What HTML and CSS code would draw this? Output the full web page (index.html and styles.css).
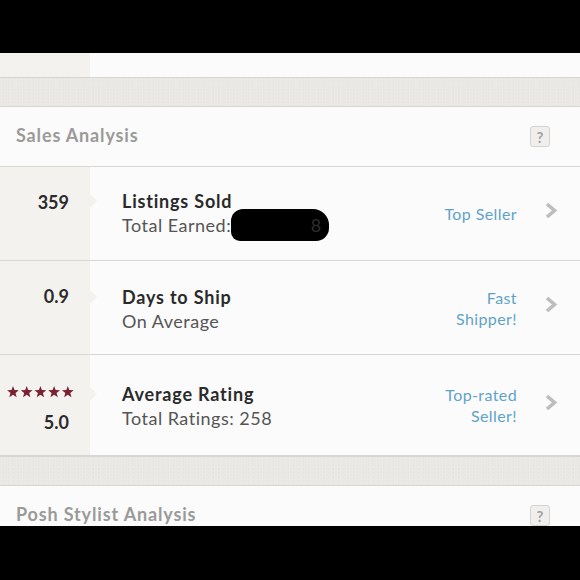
FILE: index.html
```html
<!DOCTYPE html>
<html>
<head>
<meta charset="utf-8">
<link rel="stylesheet" href="styles.css">
</head>
<body>
<div class="topbar"></div>
<div class="screen">
  <div class="stub"><div class="stub-left"></div></div>
  <div class="band"></div>
  <div class="section-head">
    <span class="section-title">Sales Analysis</span>
    <span class="help">?</span>
  </div>

  <div class="stat-row">
    <div class="stat-left"><span class="stat-num">359</span></div>
    <div class="stat-main">
      <div class="stat-text">
        <div class="stat-title">Listings Sold</div>
        <div class="stat-sub">Total Earned:<span class="redact"><span class="redact-digit">8</span></span></div>
      </div>
      <div class="badge">Top Seller</div>
      <svg class="chev" width="12" height="17" viewBox="0 0 12 17"><path d="M2 2 L9.5 8.5 L2 15" fill="none" stroke="#bdbdbd" stroke-width="3.6"/></svg>
    </div>
  </div>

  <div class="stat-row">
    <div class="stat-left"><span class="stat-num">0.9</span></div>
    <div class="stat-main">
      <div class="stat-text">
        <div class="stat-title">Days to Ship</div>
        <div class="stat-sub">On Average</div>
      </div>
      <div class="badge">Fast<br>Shipper!</div>
      <svg class="chev" width="12" height="17" viewBox="0 0 12 17"><path d="M2 2 L9.5 8.5 L2 15" fill="none" stroke="#bdbdbd" stroke-width="3.6"/></svg>
    </div>
  </div>

  <div class="stat-row tall">
    <div class="stat-left stars-col">
      <svg class="stars" width="67" height="12" viewBox="0 0 67 12">
        <defs><path id="st" d="M6 0 L7.5 4 L11.9 4.2 L8.5 6.9 L9.7 11.3 L6 8.8 L2.3 11.3 L3.5 6.9 L0.1 4.2 L4.5 4 Z" fill="#7a2134"/></defs>
        <use href="#st" x="0"/><use href="#st" x="13.7"/><use href="#st" x="27.4"/><use href="#st" x="41.1"/><use href="#st" x="54.8"/>
      </svg>
      <span class="stat-num">5.0</span>
    </div>
    <div class="stat-main">
      <div class="stat-text">
        <div class="stat-title">Average Rating</div>
        <div class="stat-sub">Total Ratings: 258</div>
      </div>
      <div class="badge">Top-rated<br>Seller!</div>
      <svg class="chev" width="12" height="17" viewBox="0 0 12 17"><path d="M2 2 L9.5 8.5 L2 15" fill="none" stroke="#bdbdbd" stroke-width="3.6"/></svg>
    </div>
  </div>

  <div class="band"></div>
  <div class="section-head">
    <span class="section-title">Posh Stylist Analysis</span>
    <span class="help">?</span>
  </div>
</div>
<div class="bottombar"></div>
</body>
</html>
```

FILE: styles.css
```css
* { box-sizing: border-box; }
html, body { margin: 0; padding: 0; }
body {
  background: #000;
  font-family: Lato, "Open Sans", sans-serif;
  width: 580px;
  height: 580px;
  overflow: hidden;
}
.topbar { height: 53px; background: #000; }
.bottombar { height: 54px; background: #000; }
.screen {
  height: 473px;
  overflow: hidden;
  background: #fbfbfb;
}
.stub { height: 24px; display: flex; }
.stub-left { width: 90px; background: #f3f2ef; }
.band {
  height: 30px;
  background-color: #eae8e4;
  background-image:
    radial-gradient(rgba(255,255,255,0.2) 0.6px, transparent 0.8px),
    radial-gradient(rgba(0,0,0,0.02) 0.6px, transparent 0.8px);
  background-size: 3px 3px, 5px 4px;
  background-position: 0 0, 1px 2px;
  border-top: 1px solid #d9d6d2;
  border-bottom: 1px solid #d9d6d2;
}
.section-head {
  height: 60px;
  display: flex;
  align-items: center;
  justify-content: space-between;
  padding: 0 30px 3px 16px;
  border-bottom: 1px solid #d9d6d3;
}
.section-title {
  font-size: 18px;
  font-weight: 700;
  color: #9a9a98;
  letter-spacing: 0.85px;
}
.help {
  width: 20px;
  height: 21px;
  border: 1px solid #d6d4d0;
  border-radius: 3px;
  background: #f0efed;
  color: #a3a19f;
  font-size: 15px;
  font-weight: 700;
  display: flex;
  align-items: center;
  justify-content: center;
}
.section-head .help { margin-top: 3px; }
.stat-row {
  height: 94px;
  display: flex;
  border-bottom: 1px solid #d9d6d3;
}
.stat-row.tall { height: 101px; }
.stat-left {
  width: 90px;
  background: #f3f2ef;
  display: flex;
  flex-direction: column;
  align-items: flex-end;
  justify-content: center;
  padding-right: 21px;
  padding-bottom: 24px;
}
.stars-col { padding-right: 16px; padding-bottom: 0; padding-top: 8px; gap: 13px; }
.stars-col .stat-num { margin-right: 5px; }
.stars { display: block; }
.stat-num {
  font-size: 18px;
  font-weight: 700;
  color: #2b2b2b;
}
.stat-main {
  flex: 1;
  display: flex;
  align-items: center;
  padding-left: 32px;
  padding-right: 23px;
}
.stat-text { flex: 1; position: relative; margin-top: 3px; }
.stat-title {
  position: relative;
  font-size: 18px;
  font-weight: 700;
  color: #2a2a2a;
  line-height: 24px;
  letter-spacing: 0.8px;
}
.stat-title::before {
  content: "";
  position: absolute;
  left: -32px;
  top: 5px;
  border-left: 7px solid #f3f2ef;
  border-top: 7px solid transparent;
  border-bottom: 7px solid transparent;
}
.stat-sub {
  font-size: 18px;
  color: #555;
  line-height: 25px;
  letter-spacing: 0.5px;
}
.redact {
  display: inline-block;
  vertical-align: middle;
  width: 98px;
  height: 32px;
  margin-top: -4px;
  background: #000;
  border-radius: 12px 16px 13px 9px;
  text-align: right;
  padding-right: 8px;
  line-height: 32px;
  color: #2d2d2d;
  font-size: 18px;
  letter-spacing: 0;
}
.badge {
  font-size: 16px;
  color: #5fa4c8;
  text-align: right;
  line-height: 21px;
  margin-right: 28px;
  letter-spacing: 0.4px;
}
.chev { display: block; margin-bottom: 6px; }
```
